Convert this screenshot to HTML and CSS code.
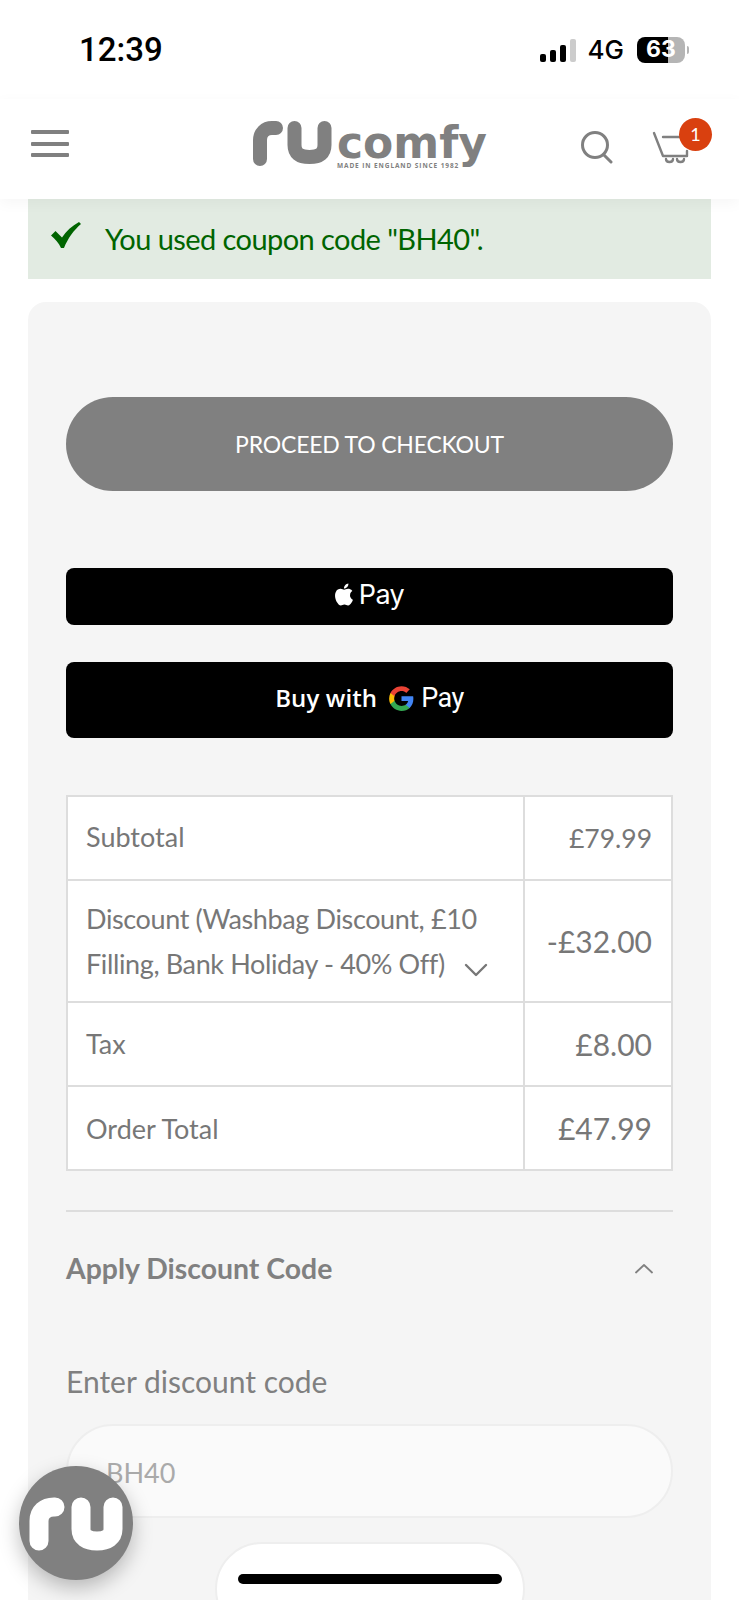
FILE: index.html
```html
<!DOCTYPE html>
<html lang="en">
<head>
  <meta charset="UTF-8" />
  <meta name="viewport" content="width=device-width, initial-scale=1.0"/>
  <title>RUcomfy - Basket</title>
  <link rel="stylesheet" href="styles.css">
</head>
<body>
  <!-- Phone status bar -->
  <div class="status-bar">
    <span class="status-time">12:39</span>
    <div class="status-right">
      <div class="signal">
        <span class="signal-bar bar-1"></span>
        <span class="signal-bar bar-2"></span>
        <span class="signal-bar bar-3"></span>
        <span class="signal-bar bar-4"></span>
      </div>
      <span class="status-net">4G</span>
      <div class="battery"><span class="battery-text">63</span></div>
      <span class="battery-nib"></span>
    </div>
  </div>

  <header class="site-header">
    <div class="hamburger">
      <span></span>
      <span></span>
      <span></span>
    </div>
    <div class="brand">
      <svg class="brand-mark" width="80" height="46" viewBox="0 0 80 46" fill="none" stroke="#808080" stroke-width="14" stroke-linecap="round">
        <path d="M7 38V19C7 12 12 7 19 7H23"/>
        <path d="M41.500 7V24C41.500 32 46 36 56.500 36C67 36 71.500 32 71.500 24V7"/>
      </svg>
      <div class="brand-text">
        <span class="brand-name">comfy</span>
        <span class="brand-tag">MADE IN ENGLAND SINCE 1982</span>
      </div>
    </div>
    <div class="header-actions">
      <svg class="icon-search" width="34" height="34" viewBox="0 0 34 34" fill="none" stroke="#808080" stroke-width="3" stroke-linecap="round">
        <circle cx="15" cy="15" r="12.500"/>
        <path d="M24 25L31 32"/>
      </svg>
      <div class="cart">
        <svg width="38" height="34" viewBox="0 0 38 34" fill="none" stroke="#808080" stroke-width="2.400" stroke-linecap="round" stroke-linejoin="round">
          <path d="M2 2L11 25H35V20"/>
          <path d="M11 6H28"/>
          <path d="M14 28C14 32 21 32 21 28"/>
          <path d="M25 28C25 32 32 32 32 28"/>
        </svg>
        <span class="cart-badge">1</span>
      </div>
    </div>
  </header>

  <main class="page">
    <div class="notice">
      <svg class="notice-check" width="30" height="26" viewBox="0 0 30 26">
        <path d="M0 13.500L4.500 9L11 15.500C15 9 21 4 28 0L30 2C23 8 17 16 13 26H10C8 21 4 17 0 13.500Z" fill="#006400"/>
      </svg>
      <span class="notice-text">You used coupon code "BH40".</span>
    </div>

    <section class="summary">
      <button class="btn-checkout">PROCEED TO CHECKOUT</button>

      <div class="btn-pay btn-apple">
        <svg width="22" height="25" viewBox="0 0 24 24" fill="#fff">
          <path d="M12.152 6.896c-.948 0-2.415-1.078-3.960-1.040-2.040.027-3.910 1.183-4.961 3.014-2.117 3.675-.546 9.103 1.519 12.090 1.013 1.454 2.208 3.090 3.792 3.039 1.520-.065 2.090-.987 3.935-.987 1.831 0 2.350.987 3.960.948 1.637-.026 2.676-1.480 3.676-2.948 1.156-1.688 1.636-3.325 1.662-3.415-.039-.013-3.182-1.221-3.220-4.857-.026-3.040 2.480-4.494 2.597-4.559-1.429-2.090-3.623-2.324-4.390-2.376-2-.156-3.675 1.090-4.610 1.090zM15.530 3.830c.843-1.012 1.400-2.427 1.245-3.830-1.207.052-2.662.805-3.532 1.818-.78.896-1.454 2.338-1.273 3.714 1.338.104 2.715-.688 3.559-1.701"/>
        </svg>
        <span class="pay-word">Pay</span>
      </div>

      <div class="btn-pay btn-google">
        <span class="buy-with">Buy with</span>
        <svg width="27" height="27" viewBox="0 0 24 24">
          <path fill="#4285F4" d="M22.56 12.25c0-.78-.07-1.53-.2-2.25H12v4.260h5.920c-.26 1.370-1.040 2.530-2.210 3.310v2.770h3.570c2.080-1.920 3.280-4.740 3.280-8.090z"/>
          <path fill="#34A853" d="M12 23c2.970 0 5.460-.98 7.280-2.660l-3.570-2.770c-.98.66-2.230 1.060-3.710 1.060-2.860 0-5.290-1.930-6.160-4.530H2.180v2.840C3.990 20.530 7.700 23 12 23z"/>
          <path fill="#FBBC05" d="M5.840 14.090c-.22-.66-.35-1.360-.35-2.090s.13-1.430.35-2.090V7.070H2.180C1.430 8.550 1 10.220 1 12s.43 3.450 1.180 4.930l2.850-2.220.81-.62z"/>
          <path fill="#EA4335" d="M12 5.380c1.620 0 3.060.56 4.210 1.640l3.150-3.150C17.450 2.090 14.970 1 12 1 7.700 1 3.990 3.470 2.180 7.070l3.660 2.840c.87-2.600 3.300-4.530 6.160-4.530z"/>
        </svg>
        <span class="pay-word pay-word-g">Pay</span>
      </div>

      <table class="totals">
        <tr class="row-short">
          <th class="label-lift">Subtotal</th>
          <td class="amount-sm">£79.99</td>
        </tr>
        <tr class="row-tall">
          <th class="label-discount">Discount (Washbag Discount, £10<br>Filling, Bank Holiday - 40% Off)
            <svg class="discount-chevron" width="24" height="14" viewBox="0 0 24 14" fill="none" stroke="#777" stroke-width="2.400" stroke-linecap="round" stroke-linejoin="round">
              <path d="M2 2L12 12L22 2"/>
            </svg>
          </th>
          <td class="amount-lg">-£32.00</td>
        </tr>
        <tr class="row-short">
          <th class="label-lift-sm">Tax</th>
          <td>£8.00</td>
        </tr>
        <tr class="row-short">
          <th>Order Total</th>
          <td>£47.99</td>
        </tr>
      </table>

      <div class="discount-head">
        <h2 class="discount-title">Apply Discount Code</h2>
        <svg width="20" height="11" viewBox="0 0 20 11" fill="none" stroke="#808080" stroke-width="1.800" stroke-linecap="round" stroke-linejoin="round">
          <path d="M2 9.500L10 2L18 9.500"/>
        </svg>
      </div>
      <label class="discount-label" for="coupon">Enter discount code</label>
      <input class="discount-input" id="coupon" type="text" value="BH40" disabled />
      <div class="cancel-pill"></div>
    </section>
  </main>

  <!-- Floating chat button and iOS home bar sit over the page -->
  <div class="fab">
    <svg width="94" height="54" viewBox="0 0 94 54" fill="none" stroke="#fff" stroke-width="19" stroke-linecap="round">
      <path d="M10 44V24C10 15 16 10 25 10H26"/>
      <path d="M52 10V32C52 40 58 44 68 44C78 44 84 40 84 32V10"/>
    </svg>
  </div>
  <div class="home-bar"></div>
</body>
</html>
```
FILE: styles.css
```css
* {
  box-sizing: border-box;
}

html, body {
  margin: 0;
  padding: 0;
  height: 1600px;
  overflow: hidden;
}

body {
  position: relative;
  font-family: 'Lato', sans-serif;
  background-color: #ffffff;
  color: #777;
}

.status-bar {
  display: flex;
  align-items: center;
  justify-content: space-between;
  height: 99px;
  padding: 0 50px 0 79px;
  color: #000;
}

.status-time {
  font-family: 'Roboto', sans-serif;
  font-size: 33px;
  font-weight: 500;
  line-height: 1;
}

.status-right {
  display: flex;
  align-items: center;
}

.signal {
  display: flex;
  align-items: flex-end;
  gap: 4px;
  height: 24px;
  margin-right: 12px;
}

.signal-bar {
  width: 6px;
  border-radius: 2px;
  background-color: #000;
}

.bar-1 { height: 8px; }
.bar-2 { height: 12px; }
.bar-3 { height: 17px; }
.bar-4 { height: 23px; background-color: #ccc; }

.status-net {
  font-family: 'Inter', sans-serif;
  font-size: 26px;
  font-weight: 500;
  line-height: 1;
  margin-right: 13px;
}

.battery {
  display: flex;
  align-items: center;
  justify-content: center;
  width: 48px;
  height: 26px;
  border-radius: 8px;
  background: linear-gradient(90deg, #000 0, #000 31px, #b5b5b5 31px, #b5b5b5 100%);
}

.battery-text {
  font-family: 'Inter', sans-serif;
  font-size: 23px;
  font-weight: 700;
  line-height: 1;
  color: #fff;
}

.battery-nib {
  width: 2px;
  height: 8px;
  margin-left: 2px;
  border-radius: 0 2px 2px 0;
  background-color: #b5b5b5;
}

.site-header {
  position: relative;
  display: flex;
  align-items: center;
  justify-content: space-between;
  height: 100px;
  padding: 0 27px 8px 31px;
  background-color: #fff;
  box-shadow: 0 4px 14px rgba(0, 0, 0, 0.04);
}

.hamburger {
  display: flex;
  flex-direction: column;
  justify-content: space-between;
  width: 38px;
  height: 27px;
  margin-top: -3px;
}

.hamburger span {
  height: 4px;
  border-radius: 1px;
  background-color: #808080;
}

.brand {
  display: flex;
  align-items: flex-start;
  gap: 4px;
  margin-left: 91px;
}

.brand-text {
  display: flex;
  flex-direction: column;
  margin-top: 3px;
}

.brand-name {
  font-family: 'DejaVu Sans', sans-serif;
  font-size: 44px;
  font-weight: 700;
  line-height: 38px;
  color: #808080;
}

.brand-tag {
  font-family: 'Open Sans', sans-serif;
  font-size: 6.500px;
  font-weight: 700;
  line-height: 8px;
  letter-spacing: 0.900px;
  color: #808080;
}

.header-actions {
  display: flex;
  align-items: flex-start;
  gap: 38px;
  margin-bottom: 6px;
}

.icon-search {
  margin-top: 12px;
}

.cart {
  position: relative;
  width: 60px;
  height: 48px;
  padding-top: 13px;
}

.cart-badge {
  position: absolute;
  top: 0;
  right: 0;
  width: 33px;
  height: 33px;
  border-radius: 50%;
  background-color: #d9400f;
  color: #fff;
  font-size: 18px;
  line-height: 33px;
  text-align: center;
}

.page {
  padding: 0 28px;
}

.notice {
  display: flex;
  align-items: center;
  gap: 24px;
  height: 80px;
  padding-left: 23px;
  background-color: #e2ebe2;
}

.notice-check {
  margin-top: -8px;
}

.notice-text {
  font-size: 29px;
  letter-spacing: -0.570px;
  color: #006400;
  margin-top: -2px;
}

.summary {
  margin-top: 23px;
  height: 1298px;
  padding: 95px 38px 0;
  border-radius: 18px 18px 0 0;
  background-color: #f5f5f5;
  overflow: hidden;
}

.btn-checkout {
  display: block;
  width: 100%;
  height: 94px;
  border: none;
  border-radius: 47px;
  background-color: #808080;
  color: #fff;
  font-family: 'Lato', sans-serif;
  font-size: 23px;
  letter-spacing: -0.200px;
}

.btn-pay {
  display: flex;
  align-items: center;
  justify-content: center;
  border-radius: 8px;
  background-color: #000;
  color: #fff;
}

.btn-apple {
  height: 57px;
  margin-top: 77px;
  gap: 4px;
  padding: 0 2px 4px 0;
}

.btn-google {
  height: 76px;
  margin-top: 37px;
  gap: 11px;
  padding-bottom: 4px;
}

.pay-word {
  font-family: 'Inter', sans-serif;
  font-size: 27px;
  font-weight: 400;
  line-height: 1;
  letter-spacing: -0.600px;
}

.pay-word-g {
  margin-left: -5px;
  font-family: 'Roboto', sans-serif;
  font-size: 27px;
  letter-spacing: -0.500px;
}

.buy-with {
  font-family: 'Open Sans', sans-serif;
  font-size: 24px;
  font-weight: 600;
  line-height: 1;
  letter-spacing: 0.100px;
}

.totals {
  width: 100%;
  margin-top: 57px;
  border-collapse: collapse;
  background-color: #fff;
  color: #777;
}

.totals th,
.totals td {
  padding: 0 19px 0 18px;
  border: 2px solid #ddd;
  font-weight: 400;
}

.totals th {
  width: 457px;
  font-size: 27px;
  line-height: 45px;
  text-align: left;
}

.totals td {
  font-size: 30px;
  text-align: right;
  white-space: nowrap;
}

.totals .label-lift {
  padding-bottom: 3px;
}

.totals .label-lift-sm {
  padding-bottom: 1px;
}

.totals .label-discount {
  padding-bottom: 1px;
  letter-spacing: -0.370px;
}

.totals .amount-sm {
  font-size: 26.500px;
}

.totals .amount-lg {
  font-size: 30px;
}

.row-short {
  height: 84px;
}

.row-tall {
  height: 122px;
}

.discount-chevron {
  margin-left: 13px;
  vertical-align: -3px;
}

.discount-head {
  display: flex;
  align-items: center;
  justify-content: space-between;
  height: 114px;
  margin-top: 39px;
  padding-right: 19px;
  border-top: 2px solid #ddd;
}

.discount-title {
  margin: 0;
  font-size: 28.400px;
  font-weight: 700;
  color: #808080;
}

.discount-label {
  display: block;
  margin-top: 39px;
  font-size: 30px;
  line-height: 36px;
  color: #808080;
}

.discount-input {
  display: block;
  width: 100%;
  height: 94px;
  margin-top: 25px;
  padding: 2px 38px 0;
  border: 2px solid #eee;
  border-radius: 47px;
  background-color: #fafafa;
  color: #aaa;
  font-family: 'Lato', sans-serif;
  font-size: 27px;
}

.cancel-pill {
  width: 310px;
  height: 94px;
  margin: 24px auto 0;
  border: 2px solid #eee;
  border-radius: 47px;
  background-color: #fff;
}

.fab {
  position: absolute;
  left: 19px;
  top: 1466px;
  display: flex;
  align-items: center;
  justify-content: center;
  width: 114px;
  height: 114px;
  padding-top: 2px;
  border-radius: 50%;
  background-color: #808080;
  box-shadow: 0 8px 20px rgba(0, 0, 0, 0.25);
}

.home-bar {
  position: absolute;
  left: 238px;
  top: 1574px;
  width: 264px;
  height: 10px;
  border-radius: 5px;
  background-color: #000;
}
```
